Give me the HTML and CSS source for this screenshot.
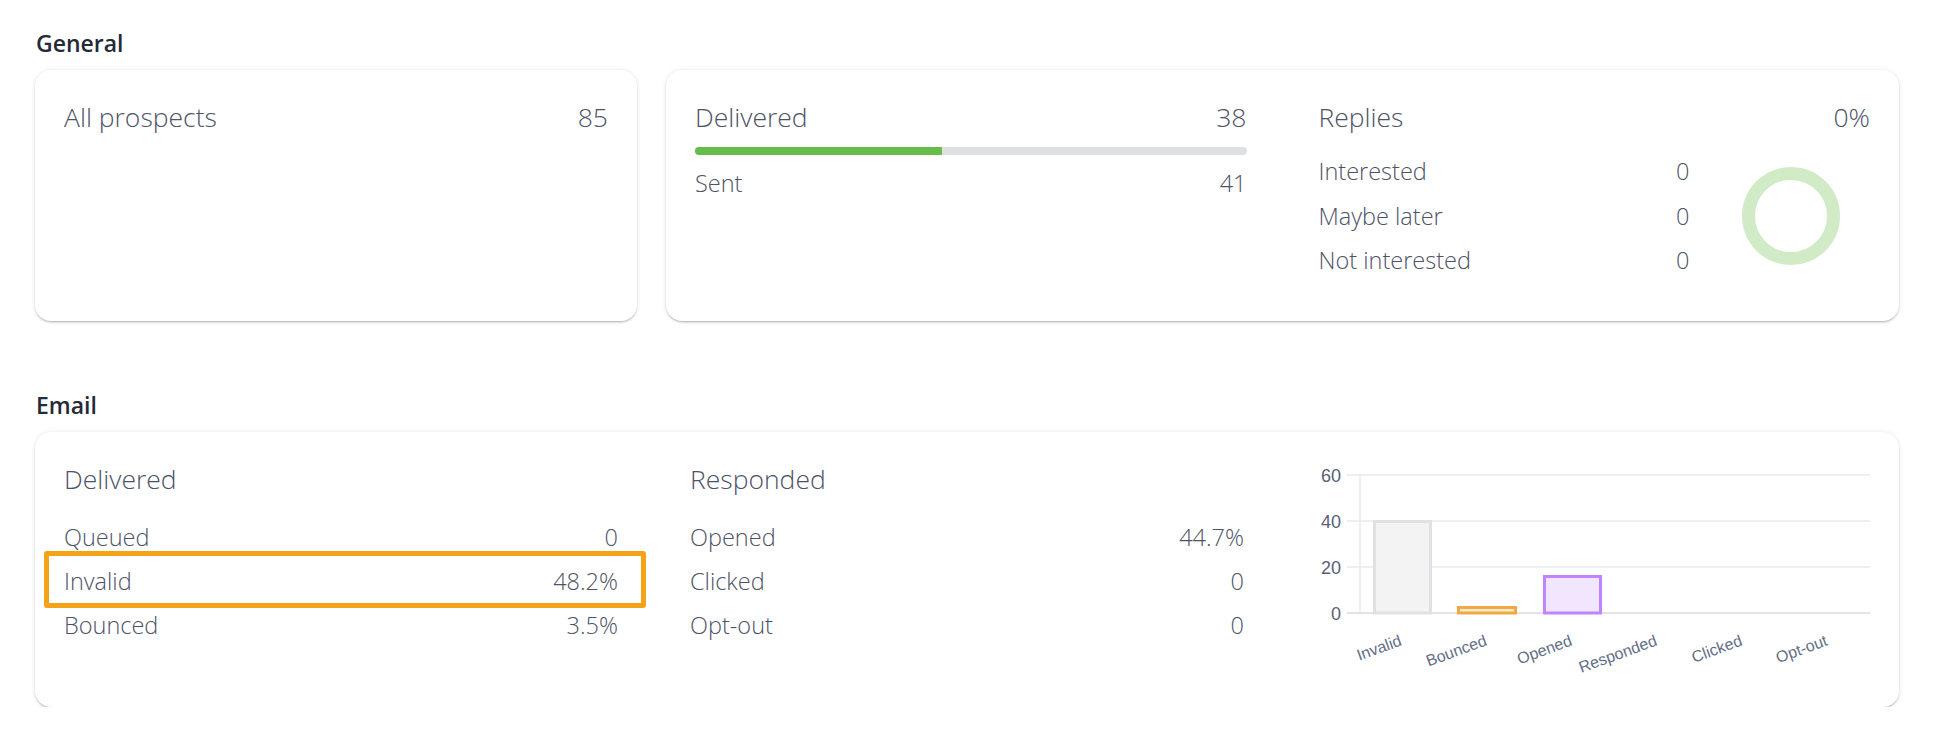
FILE: index.html
```html
<!DOCTYPE html>
<html lang="en">
<head>
    <meta charset="UTF-8">
    <meta name="viewport" content="width=device-width, initial-scale=1.0">
    <title>Campaign statistics</title>
    <link rel="stylesheet" href="styles.css">
</head>
<body>

<main class="page">

    <section class="section">
        <h2 class="section-title">General</h2>
        <div class="general-grid">
            <div class="card">
                <div class="stat-head"><span>All prospects</span><span>85</span></div>
            </div>

            <div class="card card-split">
                <div class="delivery">
                    <div class="stat-head"><span>Delivered</span><span>38</span></div>
                    <div class="progress"><div class="progress-fill" style="width: 44.7%"></div></div>
                    <div class="stat-row sent"><span>Sent</span><span>41</span></div>
                </div>

                <div class="replies">
                    <div class="stat-head"><span>Replies</span><span>0%</span></div>
                    <div class="replies-body">
                        <div class="stat-list">
                            <div class="stat-row"><span>Interested</span><span>0</span></div>
                            <div class="stat-row"><span>Maybe later</span><span>0</span></div>
                            <div class="stat-row"><span>Not interested</span><span>0</span></div>
                        </div>
                        <svg class="donut" viewBox="0 0 98 98" width="98" height="98">
                            <circle cx="49" cy="49" r="42.5" fill="none" stroke="#d2ebc7" stroke-width="13"/>
                        </svg>
                    </div>
                </div>
            </div>
        </div>
    </section>

    <section class="section section-email">
        <h2 class="section-title">Email</h2>
        <div class="card card-email">
            <div class="email-col">
                <div class="stat-head"><span>Delivered</span></div>
                <div class="stat-list email-list">
                    <div class="stat-row"><span>Queued</span><span>0</span></div>
                    <div class="stat-row is-highlighted"><span>Invalid</span><span>48.2%</span></div>
                    <div class="stat-row"><span>Bounced</span><span>3.5%</span></div>
                </div>
            </div>

            <div class="email-col">
                <div class="stat-head"><span>Responded</span></div>
                <div class="stat-list email-list">
                    <div class="stat-row"><span>Opened</span><span>44.7%</span></div>
                    <div class="stat-row"><span>Clicked</span><span>0</span></div>
                    <div class="stat-row"><span>Opt-out</span><span>0</span></div>
                </div>
            </div>

            <!-- bar chart: 0..60, 2.3px per unit -->
            <svg class="chart" viewBox="0 0 554 215" width="554" height="215">
                <g class="grid">
                    <line x1="31" y1="15" x2="554" y2="15"/>
                    <line x1="31" y1="61" x2="554" y2="61"/>
                    <line x1="31" y1="107" x2="554" y2="107"/>
                    <line x1="44" y1="15" x2="44" y2="153"/>
                </g>
                <line class="axis" x1="31" y1="153" x2="554" y2="153"/>

                <g class="ticks">
                    <text x="25" y="21.5">60</text>
                    <text x="25" y="67.5">40</text>
                    <text x="25" y="113.5">20</text>
                    <text x="25" y="159.5">0</text>
                </g>

                <rect class="bar bar-invalid" x="58.5" y="61.5" width="56" height="91.5"/>
                <rect class="bar bar-bounced" x="142.5" y="147.5" width="57" height="5.5"/>
                <rect class="bar bar-opened" x="228.5" y="116.5" width="56" height="36.5"/>

                <g class="labels">
                    <text x="86.6" y="185" transform="rotate(-20 86.6 185)">Invalid</text>
                    <text x="171.8" y="185" transform="rotate(-20 171.8 185)">Bounced</text>
                    <text x="257" y="185" transform="rotate(-20 257 185)">Opened</text>
                    <text x="342.1" y="185" transform="rotate(-20 342.1 185)">Responded</text>
                    <text x="427.3" y="185" transform="rotate(-20 427.3 185)">Clicked</text>
                    <text x="512.5" y="185" transform="rotate(-20 512.5 185)">Opt-out</text>
                </g>
            </svg>
        </div>
    </section>

</main>

</body>
</html>
```

FILE: styles.css
```css
body {
    margin: 0;
    background-color: #ffffff;
    font-family: "Open Sans", "Noto Sans", sans-serif;
    font-weight: 350;
    color: #4e5266;
}
.page {
    padding: 29px 59px 0 35px;
}
.section-email {
    margin-top: 70px;
}
.section-title {
    margin: 0 0 13px 1px;
    font-size: 23px;
    font-weight: 600;
    line-height: 28px;
    color: #262936;
}
.general-grid {
    display: grid;
    grid-template-columns: repeat(3, 1fr);
    gap: 29px;
}
.card {
    box-sizing: border-box;
    min-height: 251px;
    padding: 28px 29px;
    background-color: #ffffff;
    border-radius: 16px;
    box-shadow: 0 0 6px rgba(0, 0, 0, 0.06), 0 1px 3px rgba(0, 0, 0, 0.12), 0 2px 2px -1px rgba(0, 0, 0, 0.2);
}
.card-split {
    grid-column: span 2;
    display: grid;
    grid-template-columns: 1fr 1fr;
    column-gap: 72px;
}
.stat-head {
    display: flex;
    justify-content: space-between;
    font-size: 26.5px;
    line-height: 38px;
}
.stat-row {
    display: flex;
    justify-content: space-between;
    font-size: 23.5px;
    line-height: 33px;
}
.progress {
    height: 8px;
    margin-top: 11px;
    background-color: #dfe0e2;
    border-radius: 4px;
    overflow: hidden;
}
.progress-fill {
    height: 100%;
    background-color: #67bd4a;
}
.sent {
    margin-top: 12px;
}
.replies-body {
    display: flex;
    justify-content: space-between;
    align-items: center;
    margin-top: 19px;
}
.stat-list {
    display: flex;
    flex-direction: column;
    gap: 11.5px;
}
.replies-body .stat-list {
    width: 371px;
}
.donut {
    display: block;
    margin-right: 30px;
}

/* email card */
.card-email {
    min-height: 275px;
    display: grid;
    grid-template-columns: repeat(3, 1fr);
    column-gap: 72px;
}
.email-list {
    margin-top: 23px;
    gap: 11px;
}
.is-highlighted {
    position: relative;
}
.is-highlighted::after {
    content: "";
    position: absolute;
    left: -20px;
    right: -28px;
    top: -14px;
    bottom: -10px;
    border: 5px solid #f5a316;
    border-radius: 3px;
}

/* chart */
.chart {
    display: block;
    font-family: "Liberation Sans", Arial, sans-serif;
}
.grid line {
    stroke: #e7eaf0;
    stroke-width: 1.5;
}
.axis {
    stroke: #d6dae2;
    stroke-width: 1.5;
}
.ticks text {
    font-size: 18px;
    fill: #576077;
    text-anchor: end;
}
.labels text {
    font-size: 16px;
    fill: #646d86;
    text-anchor: end;
}
.bar {
    stroke-width: 3;
}
.bar-invalid {
    fill: #f3f3f4;
    stroke: #e1e1e3;
}
.bar-bounced {
    fill: #fbe7d2;
    stroke: #f1aa42;
}
.bar-opened {
    fill: #f1e6fe;
    stroke: #c084fc;
}
```
